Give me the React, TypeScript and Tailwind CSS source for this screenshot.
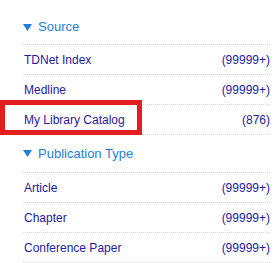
const sections = [
  {
    title: "Source",
    items: [
      { label: "TDNet Index", count: "(99999+)" },
      { label: "Medline", count: "(99999+)" },
      { label: "My Library Catalog", count: "(876)", marked: true },
    ],
  },
  {
    title: "Publication Type",
    items: [
      { label: "Article", count: "(99999+)" },
      { label: "Chapter", count: "(99999+)" },
      { label: "Conference Paper", count: "(99999+)" },
    ],
  },
];

function Caret() {
  return (
    <svg width="9" height="7" viewBox="0 0 9 7" className="mr-[6px] shrink-0">
      <polygon points="0,0 9,0 4.5,7" fill="#1e7fd8" />
    </svg>
  );
}

export default function App() {
  return (
    <div className="w-[280px] h-[263px] overflow-hidden bg-white pt-[8px] pl-[23px] pr-[10px] font-['Liberation_Sans',Arial,sans-serif]">
      {sections.map((s, i) => (
        <div key={s.title}>
          <div
            className={
              (i === 0 ? "h-[37px] pt-[2px] " : "h-[38px] ") +
              "flex items-center border-b border-dotted border-[#d9d9d9] text-[13px] text-[#1e7fd8]"
            }
          >
            <Caret />
            <span>{s.title}</span>
          </div>
          {s.items.map((it) => (
            <div
              key={it.label}
              className="relative h-[30px] flex items-center justify-between border-b border-dotted border-[#d9d9d9] text-[12px] text-[#231c9c]"
            >
              <span className="pl-px">{it.label}</span>
              <span>{it.count}</span>
              {it.marked && (
                <div className="absolute left-[-23px] top-[-5px] w-[142px] h-[35px] border-[5px] border-[#e21f1f]" />
              )}
            </div>
          ))}
        </div>
      ))}
    </div>
  );
}
